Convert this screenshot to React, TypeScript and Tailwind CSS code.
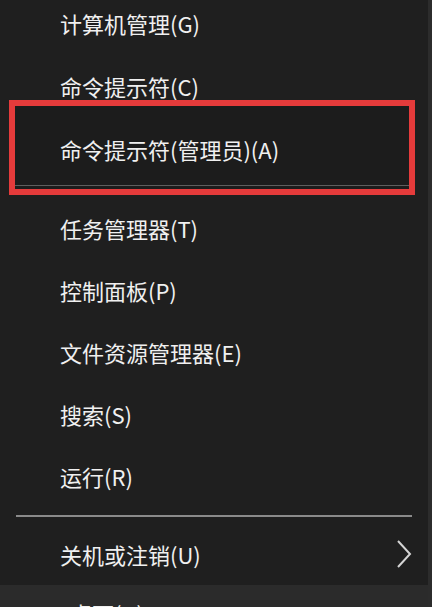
const font = { fontFamily: '"Noto Sans CJK SC", "Noto Sans", sans-serif' };

const upper = ["任务管理器(T)", "控制面板(P)", "文件资源管理器(E)", "搜索(S)", "运行(R)"];

function Item({ label, className = "" }: { label: string; className?: string }) {
  return (
    <div className={`flex h-[62px] shrink-0 items-center pl-[60px] ${className}`}>
      <span className="text-[22px] leading-[26px] text-[#f0f0f0]">{label}</span>
    </div>
  );
}

export default function App() {
  return (
    <div
      style={font}
      className="flex h-[607px] w-[432px] flex-col overflow-hidden border-r-4 border-[#2c2c2c] bg-[#1f1f1f]"
    >
      <div className="flex h-[46px] shrink-0 items-center pl-[60px]">
        <span className="text-[22px] leading-[26px] text-[#f0f0f0]">计算机管理(G)</span>
      </div>
      <div className="flex h-[54px] shrink-0 items-end pb-[1px] pl-[60px]">
        <span className="text-[22px] leading-[26px] text-[#f0f0f0]">命令提示符(C)</span>
      </div>

      <div className="ml-[9px] h-[95px] w-[406px] shrink-0 border-[6px] border-[#e53b3b] bg-[#1c1c1c]">
        <div className="flex h-[80px] items-center border-b border-[#5e5e5e] pl-[45px] pt-[6px]">
          <span className="text-[22px] leading-[26px] text-[#f0f0f0]">命令提示符(管理员)(A)</span>
        </div>
      </div>

      <div className="mt-[2px] flex flex-col">
        {upper.map((label) => (
          <Item key={label} label={label} />
        ))}
      </div>

      <div className="mx-[16px] mt-[8px] h-[2px] shrink-0 bg-[#8a8a8a]" />

      <div className="mt-[6px] flex h-[62px] shrink-0 items-center justify-between pl-[60px] pr-[16px]">
        <span className="text-[22px] leading-[26px] text-[#f0f0f0]">关机或注销(U)</span>
        <svg width="16" height="28" viewBox="0 0 16 28" fill="none">
          <polyline points="2,1 14,14 2,27" stroke="#d4d4d4" strokeWidth="2" />
        </svg>
      </div>

      <div className="flex h-[56px] shrink-0 items-start bg-[#2b2b2b] pl-[70px] pt-[15px]">
        <span className="text-[22px] leading-[26px] text-[#f0f0f0]">桌面(D)</span>
      </div>
    </div>
  );
}
